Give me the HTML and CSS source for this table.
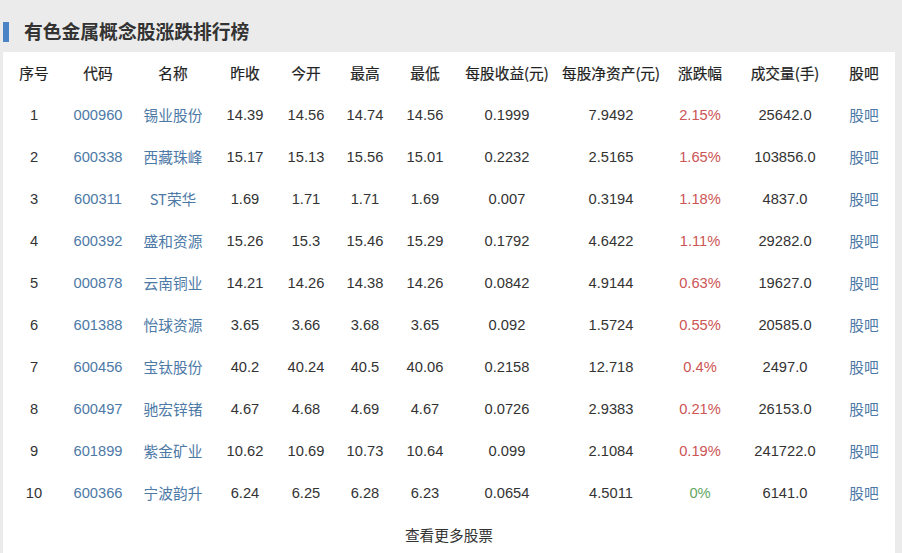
FILE: index.html
```html
<!DOCTYPE html>
<html lang="zh-CN">
<head>
<meta charset="utf-8">
<title>有色金属概念股涨跌排行榜</title>
<link rel="stylesheet" href="styles.css">
</head>
<body>
<div class="page">
  <div class="title-bar">
    <span class="mark"></span>
    <h1 class="title">有色金属概念股涨跌排行榜</h1>
  </div>
  <div class="panel">
    <table class="rank">
      <colgroup>
        <col class="c1"><col class="c2"><col class="c3"><col class="c4"><col class="c5"><col class="c6">
        <col class="c7"><col class="c8"><col class="c9"><col class="c10"><col class="c11"><col class="c12">
      </colgroup>
      <thead>
        <tr><th>序号</th><th>代码</th><th>名称</th><th>昨收</th><th>今开</th><th>最高</th><th>最低</th><th>每股收益(元)</th><th>每股净资产(元)</th><th>涨跌幅</th><th>成交量(手)</th><th>股吧</th></tr>
      </thead>
      <tbody>
        <tr><td>1</td><td class="link">000960</td><td class="link cn">锡业股份</td><td>14.39</td><td>14.56</td><td>14.74</td><td>14.56</td><td>0.1999</td><td>7.9492</td><td class="up">2.15%</td><td>25642.0</td><td class="link cn">股吧</td></tr>
        <tr><td>2</td><td class="link">600338</td><td class="link cn">西藏珠峰</td><td>15.17</td><td>15.13</td><td>15.56</td><td>15.01</td><td>0.2232</td><td>2.5165</td><td class="up">1.65%</td><td>103856.0</td><td class="link cn">股吧</td></tr>
        <tr><td>3</td><td class="link">600311</td><td class="link cn">ST荣华</td><td>1.69</td><td>1.71</td><td>1.71</td><td>1.69</td><td>0.007</td><td>0.3194</td><td class="up">1.18%</td><td>4837.0</td><td class="link cn">股吧</td></tr>
        <tr><td>4</td><td class="link">600392</td><td class="link cn">盛和资源</td><td>15.26</td><td>15.3</td><td>15.46</td><td>15.29</td><td>0.1792</td><td>4.6422</td><td class="up">1.11%</td><td>29282.0</td><td class="link cn">股吧</td></tr>
        <tr><td>5</td><td class="link">000878</td><td class="link cn">云南铜业</td><td>14.21</td><td>14.26</td><td>14.38</td><td>14.26</td><td>0.0842</td><td>4.9144</td><td class="up">0.63%</td><td>19627.0</td><td class="link cn">股吧</td></tr>
        <tr><td>6</td><td class="link">601388</td><td class="link cn">怡球资源</td><td>3.65</td><td>3.66</td><td>3.68</td><td>3.65</td><td>0.092</td><td>1.5724</td><td class="up">0.55%</td><td>20585.0</td><td class="link cn">股吧</td></tr>
        <tr><td>7</td><td class="link">600456</td><td class="link cn">宝钛股份</td><td>40.2</td><td>40.24</td><td>40.5</td><td>40.06</td><td>0.2158</td><td>12.718</td><td class="up">0.4%</td><td>2497.0</td><td class="link cn">股吧</td></tr>
        <tr><td>8</td><td class="link">600497</td><td class="link cn">驰宏锌锗</td><td>4.67</td><td>4.68</td><td>4.69</td><td>4.67</td><td>0.0726</td><td>2.9383</td><td class="up">0.21%</td><td>26153.0</td><td class="link cn">股吧</td></tr>
        <tr><td>9</td><td class="link">601899</td><td class="link cn">紫金矿业</td><td>10.62</td><td>10.69</td><td>10.73</td><td>10.64</td><td>0.099</td><td>2.1084</td><td class="up">0.19%</td><td>241722.0</td><td class="link cn">股吧</td></tr>
        <tr><td>10</td><td class="link">600366</td><td class="link cn">宁波韵升</td><td>6.24</td><td>6.25</td><td>6.28</td><td>6.23</td><td>0.0654</td><td>4.5011</td><td class="flat">0%</td><td>6141.0</td><td class="link cn">股吧</td></tr>
      </tbody>
    </table>
    <div class="more">查看更多股票</div>
  </div>
</div>
</body>
</html>
```
FILE: styles.css
```css
html, body {
  margin: 0;
  padding: 0;
  background: #ebebeb;
}
body {
  font-family: "Liberation Sans", "Noto Sans CJK SC", sans-serif;
  color: #333;
  width: 902px;
  height: 553px;
  overflow: hidden;
}
.page {
  padding: 0 7px 0 3px;
}
.title-bar {
  height: 52px;
  display: flex;
  align-items: center;
}
.mark {
  width: 6px;
  height: 20px;
  background: #4a84c6;
  margin-top: 12px;
}
.title {
  margin: 9px 0 0 15px;
  font-size: 18.8px;
  line-height: 26px;
  font-weight: bold;
  color: #333;
  font-family: "Noto Sans CJK SC", sans-serif;
}
.panel {
  background: #fff;
  height: 510px;
}
.rank {
  border-collapse: collapse;
  table-layout: fixed;
  width: 890px;
  font-size: 14.7px;
}
.c1 { width: 62px; }
.c2 { width: 66px; }
.c3 { width: 84px; }
.c4 { width: 60px; }
.c5 { width: 62px; }
.c6 { width: 56px; }
.c7 { width: 64px; }
.c8 { width: 100px; }
.c9 { width: 108px; }
.c10 { width: 70px; }
.c11 { width: 100px; }
.c12 { width: 58px; }
.rank th, .rank td {
  height: 42px;
  padding: 0;
  text-align: center;
  white-space: nowrap;
  vertical-align: middle;
  line-height: 20px;
}
.rank th {
  font-weight: normal;
  color: #222;
  font-family: "Noto Sans CJK SC", sans-serif;
  -webkit-text-stroke: 0.2px #222;
}
.rank td {
  color: #333;
}
.rank td.cn {
  font-family: "Noto Sans CJK SC", sans-serif;
}
.rank td.link {
  color: #4d79a6;
}
.rank td.up {
  color: #cc5555;
}
.rank td.flat {
  color: #5fa85f;
}
.more {
  height: 42px;
  line-height: 42px;
  text-align: center;
  font-size: 14.7px;
  color: #333;
  font-family: "Noto Sans CJK SC", sans-serif;
}
```
